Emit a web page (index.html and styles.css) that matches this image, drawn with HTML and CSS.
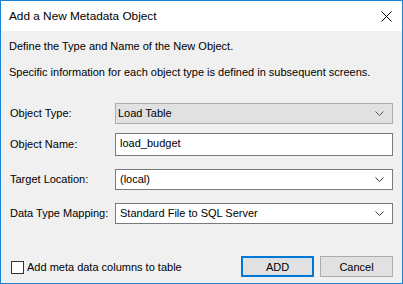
FILE: index.html
```
<!DOCTYPE html>
<html lang="en">
<head>
    <meta charset="UTF-8">
    <title>Add a New Metadata Object</title>
    <link rel="stylesheet" href="styles.css">
</head>
<body>
    <div class="window">
        <div class="titlebar">
            <span class="title">Add a New Metadata Object</span>
            <svg class="close" width="11" height="11" viewBox="0 0 11 11">
                <path d="M0.5 0.5 L10.5 10.5 M10.5 0.5 L0.5 10.5" stroke="#000" stroke-width="1" fill="none"/>
            </svg>
        </div>
        <div class="content">
            <p class="intro first">Define the Type and Name of the New Object.</p>
            <p class="intro">Specific information for each object type is defined in subsequent screens.</p>

            <div class="form">
                <div class="row">
                    <label class="lbl">Object Type:</label>
                    <div class="combo gray">
                        <span class="val">Load Table</span>
                        <svg class="chev" width="9" height="5" viewBox="0 0 9 5"><path d="M0.5 0.5 L4.5 4.5 L8.5 0.5" stroke="#555" fill="none"/></svg>
                    </div>
                </div>
                <div class="row tight">
                    <label class="lbl">Object Name:</label>
                    <div class="textbox"><span class="val">load_budget</span></div>
                </div>
                <div class="row">
                    <label class="lbl">Target Location:</label>
                    <div class="combo">
                        <span class="val">(local)</span>
                        <svg class="chev" width="9" height="5" viewBox="0 0 9 5"><path d="M0.5 0.5 L4.5 4.5 L8.5 0.5" stroke="#333" fill="none"/></svg>
                    </div>
                </div>
                <div class="row">
                    <label class="lbl">Data Type Mapping:</label>
                    <div class="combo">
                        <span class="val">Standard File to SQL Server</span>
                        <svg class="chev" width="9" height="5" viewBox="0 0 9 5"><path d="M0.5 0.5 L4.5 4.5 L8.5 0.5" stroke="#333" fill="none"/></svg>
                    </div>
                </div>
            </div>

            <div class="footer">
                <label class="check"><span class="box"></span>Add meta data columns to table</label>
                <div class="buttons">
                    <button class="btn default">ADD</button>
                    <button class="btn">Cancel</button>
                </div>
            </div>
        </div>
    </div>
</body>
</html>
```
FILE: styles.css
```
body{
    margin: 0;
    background-color: #f0f0f0;
    font-family: "Liberation Sans", Arial, sans-serif;
    font-size: 11px;
    color: #000;
}
.window{
    width: 403px;
    height: 284px;
    box-sizing: border-box;
    border: 1px solid #1883d7;
    display: flex;
    flex-direction: column;
    background-color: #f0f0f0;
}
.titlebar{
    height: 30px;
    flex: none;
    background-color: #fff;
    display: flex;
    align-items: center;
    justify-content: space-between;
    padding: 0 10px 0 8px;
}
.title{
    font-size: 11.8px;
    line-height: 15px;
    margin-top: 1px;
    white-space: nowrap;
}
.close{
    display: block;
}
.content{
    flex: 1;
    display: flex;
    flex-direction: column;
    padding: 0 9px 6px 8px;
}
.intro{
    margin: 11px 0 0 0;
    line-height: 15px;
    white-space: nowrap;
}
.intro.first{
    margin-top: 8px;
}
.form{
    margin-top: 23px;
    display: flex;
    flex-direction: column;
    gap: 13px;
}
.row{
    display: grid;
    grid-template-columns: 106px 1fr;
    align-items: center;
}
.row.tight{
    margin-top: -4px;
}
.lbl{
    padding-left: 1px;
    line-height: 15px;
    white-space: nowrap;
}
.combo, .textbox{
    height: 21px;
    box-sizing: border-box;
    border: 1px solid #7a7a7a;
    background-color: #fff;
    display: flex;
    align-items: center;
    justify-content: space-between;
    padding: 0 8px 0 4px;
}
.combo.gray{
    background-color: #e1e1e1;
    border-color: #adadad;
    padding-left: 2px;
}
.textbox{
    height: 23px;
    padding-left: 4px;
    padding-bottom: 3px;
}
.val{
    line-height: 15px;
    white-space: nowrap;
}
.chev{
    display: block;
}
.footer{
    margin-top: auto;
    display: flex;
    align-items: center;
    justify-content: space-between;
}
.check{
    display: flex;
    align-items: center;
    padding-left: 2px;
    gap: 3px;
    margin-top: 1px;
    white-space: nowrap;
}
.box{
    width: 13px;
    height: 13px;
    box-sizing: border-box;
    border: 1px solid #333;
    background-color: #fff;
}
.buttons{
    display: flex;
    gap: 6px;
}
.btn{
    width: 73px;
    height: 21px;
    box-sizing: border-box;
    border: 1px solid #adadad;
    background-color: #e1e1e1;
    font-family: inherit;
    font-size: 11px;
    padding: 0;
    color: #000;
}
.btn.default{
    border: 2px solid #0078d7;
}
```
